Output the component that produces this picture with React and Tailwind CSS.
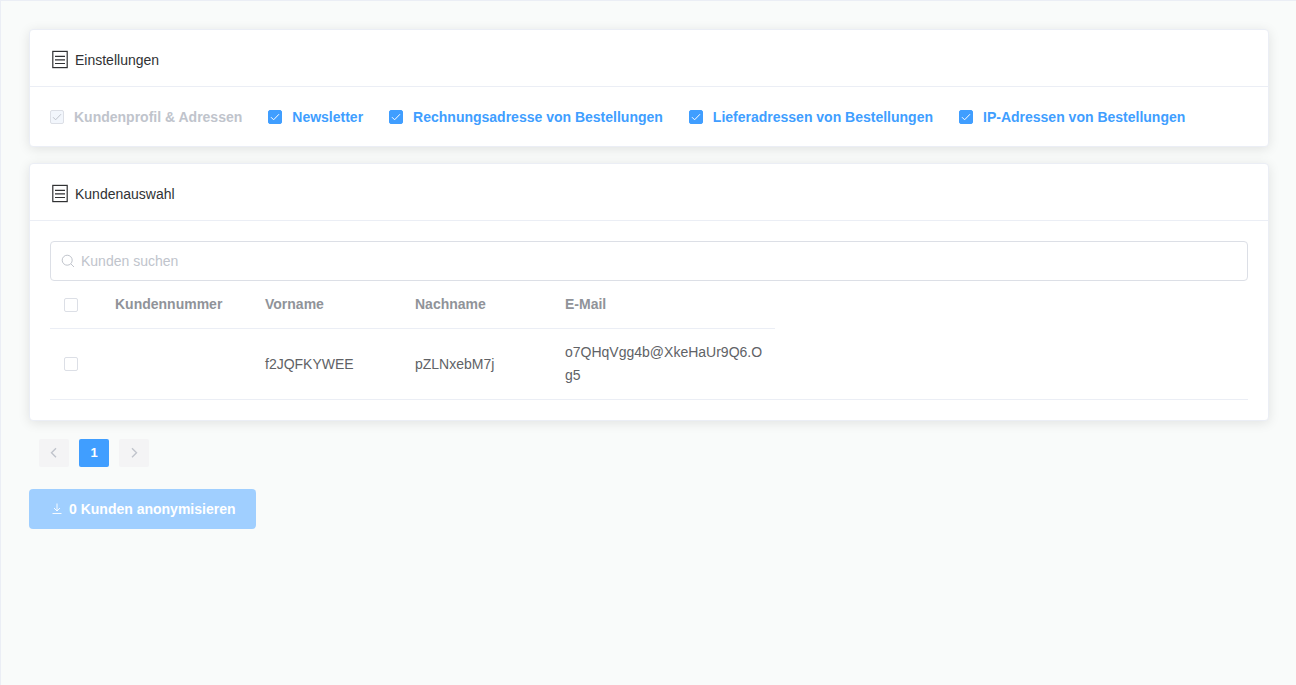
import { useState } from "react";

const initialSettings = [
  { id: "profile", label: "Kundenprofil & Adressen", checked: true, disabled: true },
  { id: "newsletter", label: "Newsletter", checked: true },
  { id: "billing", label: "Rechnungsadresse von Bestellungen", checked: true },
  { id: "shipping", label: "Lieferadressen von Bestellungen", checked: true },
  { id: "ip", label: "IP-Adressen von Bestellungen", checked: true },
];

const customers = [
  { id: 1, number: "", firstName: "f2JQFKYWEE", lastName: "pZLNxebM7j", email: "o7QHqVgg4b@XkeHaUr9Q6.Og5" },
];

function DocumentIcon() {
  return (
    <svg width="18" height="20" viewBox="0 0 18 20" fill="none" stroke="#303133" aria-hidden="true">
      <rect x="1.8" y="1.4" width="14.4" height="16.2" strokeWidth="1.2" />
      <path d="M4 6.4h10M4 9.9h10M4 13.5h10" strokeWidth="1.2" />
    </svg>
  );
}

function Checkbox({ checked, ...props }) {
  return (
    <span className="grid size-[14px] shrink-0">
      <input
        type="checkbox"
        checked={checked}
        className="peer col-start-1 row-start-1 size-[14px] appearance-none rounded-xs border border-[#dcdfe6] bg-white checked:border-[#409eff] checked:bg-[#409eff] disabled:border-[#dcdfe6] disabled:bg-[#f2f6fc]"
        {...props}
      />
      {checked && (
        <svg
          viewBox="0 0 14 14"
          className="pointer-events-none col-start-1 row-start-1 size-[14px] text-white peer-disabled:text-[#c0c4cc]"
          fill="none"
          stroke="currentColor"
          strokeWidth="1"
          aria-hidden="true"
        >
          <path d="M3 7.2l2.6 2.6L11 4.2" />
        </svg>
      )}
    </span>
  );
}

function Card({ title, children }) {
  return (
    <section className="rounded border border-[#ebeef5] bg-white shadow-[0_2px_12px_0_rgba(0,0,0,0.1)]">
      <header className="flex h-[57px] items-center gap-1.5 border-b border-[#ebeef5] px-[21px] pt-1 text-[#303133]">
        <DocumentIcon />
        <h2>{title}</h2>
      </header>
      {children}
    </section>
  );
}

function App() {
  const [settings, setSettings] = useState(initialSettings);
  const [selected, setSelected] = useState([]);
  const [search, setSearch] = useState("");

  const toggleSetting = (id) => {
    setSettings(settings.map((s) => (s.id === id ? { ...s, checked: !s.checked } : s)));
  };

  const toggleCustomer = (id) => {
    setSelected(selected.includes(id) ? selected.filter((s) => s !== id) : [...selected, id]);
  };

  const allSelected = selected.length === customers.length;

  return (
    <main className="min-h-screen border-t border-l border-[#ebeef5] bg-[#f9fbfa] py-7 pr-[27px] pl-7 font-['Helvetica_Neue','Liberation_Sans',sans-serif] text-sm text-[#606266]">
      <div className="space-y-4">
        <Card title="Einstellungen">
          <div className="flex flex-wrap gap-x-[26px] gap-y-3 p-5">
            {settings.map((setting) => (
              <label
                key={setting.id}
                className="flex h-[19px] items-center gap-2.5 font-bold text-[#409eff] has-disabled:text-[#c0c4cc]"
              >
                <Checkbox
                  checked={setting.checked}
                  disabled={setting.disabled}
                  onChange={() => toggleSetting(setting.id)}
                />
                {setting.label}
              </label>
            ))}
          </div>
        </Card>

        <Card title="Kundenauswahl">
          <div className="p-5">
            <div className="flex h-10 items-center gap-1.5 rounded border border-[#dcdfe6] bg-white px-2.5">
              <svg width="14" height="14" viewBox="0 0 14 14" fill="none" stroke="#c0c4cc" aria-hidden="true">
                <circle cx="6.2" cy="6.2" r="5" />
                <path d="M9.8 9.8l3.2 3.2" />
              </svg>
              <input
                type="text"
                aria-label="Kunden suchen"
                placeholder="Kunden suchen"
                value={search}
                onChange={(e) => setSearch(e.target.value)}
                className="min-w-0 flex-1 outline-none placeholder:text-[#c0c4cc]"
              />
            </div>

            <div className="border-b border-[#ebeef5]">
              <table className="w-[725px] table-fixed text-left leading-[23px]">
                <colgroup>
                  <col className="w-[55px]" />
                  <col className="w-[150px]" />
                  <col className="w-[150px]" />
                  <col className="w-[150px]" />
                  <col className="w-[220px]" />
                </colgroup>
                <thead>
                  <tr className="border-b border-[#ebeef5] text-[#909399]">
                    <th className="px-3.5 py-3">
                      <Checkbox
                        aria-label="Alle Kunden"
                        checked={allSelected}
                        onChange={() => setSelected(allSelected ? [] : customers.map((c) => c.id))}
                      />
                    </th>
                    <th className="px-2.5 py-3">Kundennummer</th>
                    <th className="px-2.5 py-3">Vorname</th>
                    <th className="px-2.5 py-3">Nachname</th>
                    <th className="px-2.5 py-3">E-Mail</th>
                  </tr>
                </thead>
                <tbody>
                  {customers.map((customer) => (
                    <tr key={customer.id}>
                      <td className="px-3.5 py-3">
                        <Checkbox
                          aria-label={customer.firstName}
                          checked={selected.includes(customer.id)}
                          onChange={() => toggleCustomer(customer.id)}
                        />
                      </td>
                      <td className="px-2.5 py-3">{customer.number}</td>
                      <td className="px-2.5 py-3">{customer.firstName}</td>
                      <td className="px-2.5 py-3">{customer.lastName}</td>
                      <td className="px-2.5 py-3 break-all">{customer.email}</td>
                    </tr>
                  ))}
                </tbody>
              </table>
            </div>
          </div>
        </Card>
      </div>

      <nav aria-label="Seiten" className="mt-[18px] flex gap-2.5 px-2.5">
        <button disabled aria-label="Zurück" className="grid h-7 w-[30px] place-items-center rounded-xs bg-[#f4f4f5] text-[#c0c4cc]">
          <svg width="12" height="12" viewBox="0 0 12 12" fill="none" stroke="currentColor" strokeWidth="1.4">
            <path d="M8 1.2L3.5 5.7 8 10.2" />
          </svg>
        </button>
        <button aria-current="page" className="h-7 w-[30px] rounded-xs bg-[#409eff] text-[13px] font-bold text-white">
          1
        </button>
        <button disabled aria-label="Weiter" className="grid h-7 w-[30px] place-items-center rounded-xs bg-[#f4f4f5] text-[#c0c4cc]">
          <svg width="12" height="12" viewBox="0 0 12 12" fill="none" stroke="currentColor" strokeWidth="1.4">
            <path d="M4 1.2L8.5 5.7 4 10.2" />
          </svg>
        </button>
      </nav>

      <button
        disabled={selected.length === 0}
        className="mt-[22px] flex h-10 items-center gap-1.5 rounded bg-[#409eff] px-5 font-bold text-white disabled:bg-[#a0cfff]"
      >
        <svg width="14" height="14" viewBox="0 0 14 14" fill="none" stroke="currentColor" strokeWidth="0.9" aria-hidden="true">
          <path d="M8 1.5v7.5M5 6l3 3 3-3M3.5 11.5h9" />
        </svg>
        {selected.length} Kunden anonymisieren
      </button>
    </main>
  );
}

export default App;
